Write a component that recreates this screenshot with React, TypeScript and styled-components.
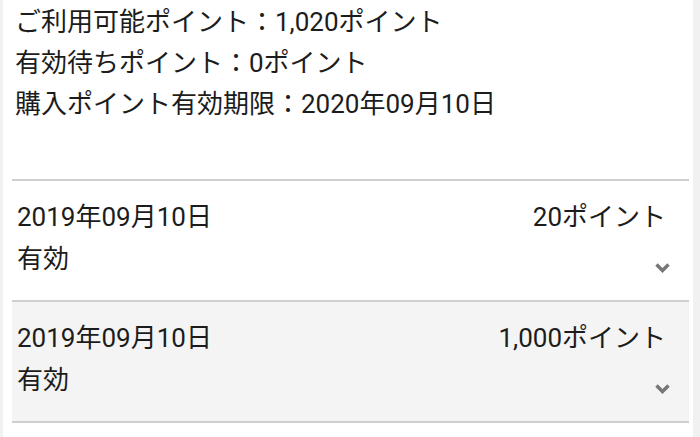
import styled, { createGlobalStyle } from 'styled-components';

const GlobalStyle = createGlobalStyle`
  html, body {
    margin: 0;
    padding: 0;
    background: #f1f1f1;
  }
  body {
    font-family: Roboto, "Noto Sans CJK JP", sans-serif;
    color: #1c1c1c;
  }
`;

const Page = styled.div`
  margin: 0 7px 0 3px;
  min-height: 437px;
  background: #ffffff;
  padding: 0 4px 0 9px;
`;

const Summary = styled.div`
  padding: 2px 0 0 3px;
  height: 179px;
  box-sizing: border-box;
`;

const SummaryLine = styled.div`
  font-size: 26px;
  line-height: 41px;
`;

const HistoryList = styled.ul`
  list-style: none;
  margin: 0;
  padding: 0;
  border-top: 2px solid #cfcfcf;
`;

const HistoryItem = styled.li<{ $shaded?: boolean }>`
  display: grid;
  grid-template-columns: 1fr auto;
  padding: 15px 23px 0 5px;
  height: 121px;
  box-sizing: border-box;
  border-bottom: 2px solid #cfcfcf;
  background: ${(p) => (p.$shaded ? '#f4f4f4' : '#ffffff')};
  font-size: 26px;
  line-height: 42px;
`;

const Left = styled.div`
  display: flex;
  flex-direction: column;
`;

const Right = styled.div`
  display: flex;
  flex-direction: column;
  align-items: flex-end;
`;

const Chevron = styled.svg`
  margin-top: 24px;
  margin-right: -5px;
  width: 17px;
  height: 12px;
`;

const items = [
  { date: '2019年09月10日', status: '有効', points: '20ポイント' },
  { date: '2019年09月10日', status: '有効', points: '1,000ポイント' },
];

export default function App() {
  return (
    <>
      <GlobalStyle />
      <Page>
        <Summary>
          <SummaryLine>ご利用可能ポイント：1,020ポイント</SummaryLine>
          <SummaryLine>有効待ちポイント：0ポイント</SummaryLine>
          <SummaryLine>購入ポイント有効期限：2020年09月10日</SummaryLine>
        </Summary>
        <HistoryList>
          {items.map((item, i) => (
            <HistoryItem key={i} $shaded={i % 2 === 1}>
              <Left>
                <span>{item.date}</span>
                <span>{item.status}</span>
              </Left>
              <Right>
                <span>{item.points}</span>
                <Chevron viewBox="0 0 17 12">
                  <path d="M2.5 2.5 L8.5 8.5 L14.5 2.5" fill="none" stroke="#777" strokeWidth="3.5" />
                </Chevron>
              </Right>
            </HistoryItem>
          ))}
        </HistoryList>
      </Page>
    </>
  );
}
